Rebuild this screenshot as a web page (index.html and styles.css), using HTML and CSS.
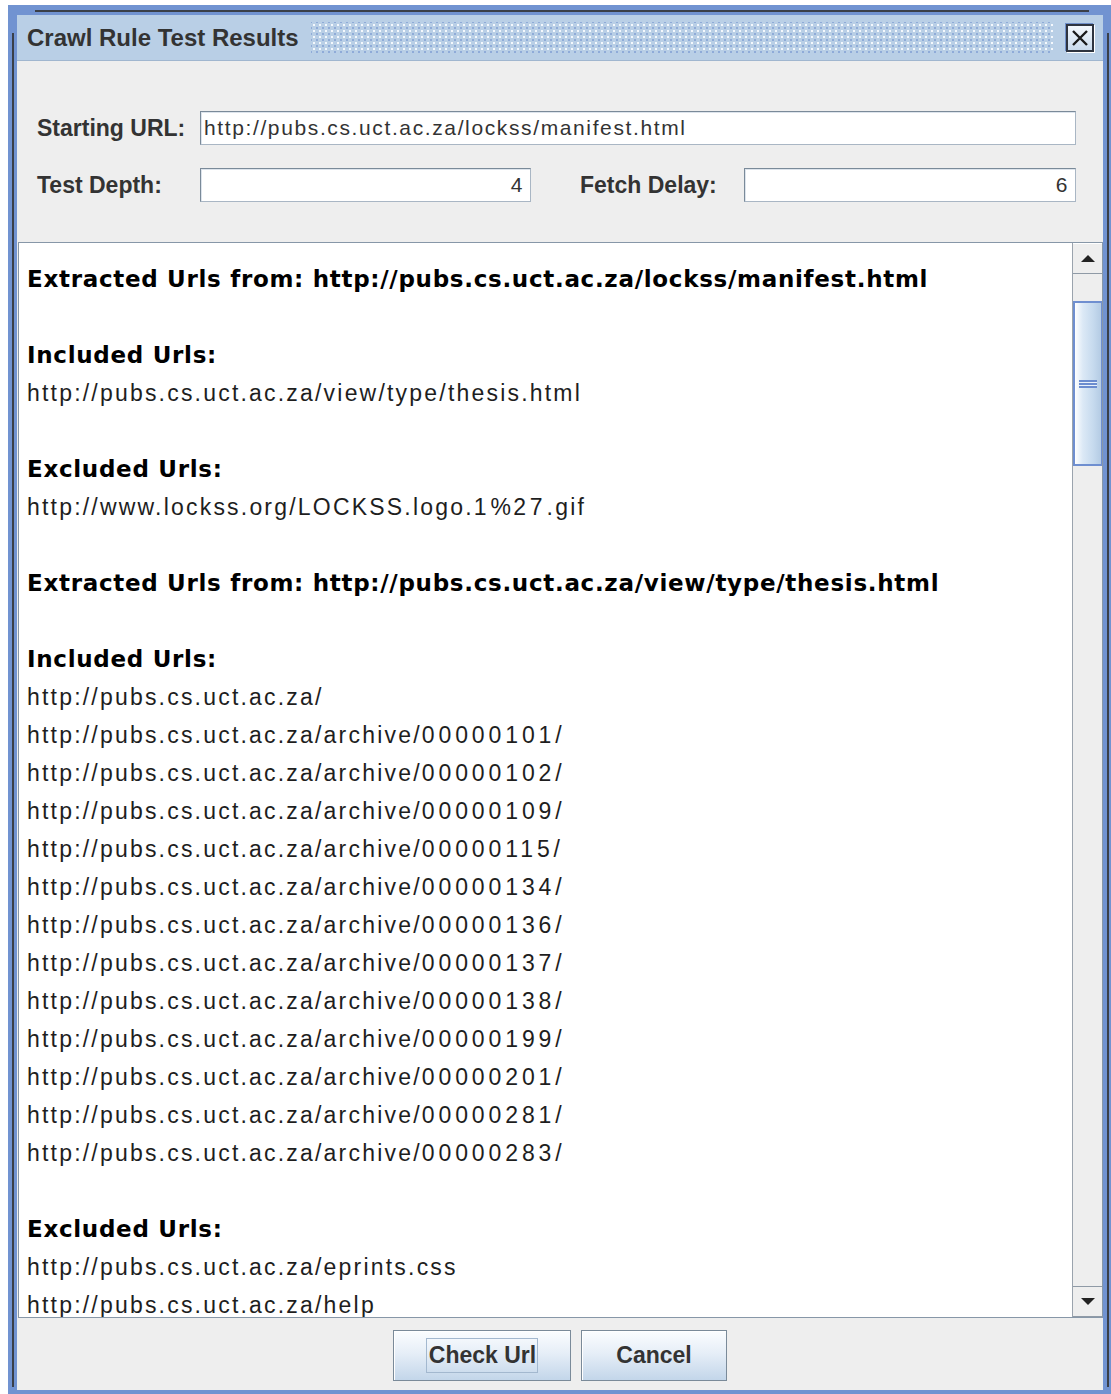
FILE: index.html
```html
<!DOCTYPE html>
<html lang="en">
<head>
<meta charset="utf-8">
<title>Crawl Rule Test Results</title>
<link rel="stylesheet" href="styles.css">
</head>
<body>
<div class="window">
  <div class="titlebar">
    <span class="title">Crawl Rule Test Results</span>
    <span class="bumps"></span>
    <span class="close" aria-label="Close">
      <svg width="24" height="24" viewBox="0 0 24 24">
        <path d="M5 5 L19 19 M19 5 L5 19" stroke="#1a1a1a" stroke-width="2.4" fill="none"/>
      </svg>
    </span>
  </div>
  <div class="content">
    <div class="form">
      <span class="lbl">Starting URL:</span>
      <div class="field wide">http://pubs.cs.uct.ac.za/lockss/manifest.html</div>
      <span class="lbl">Test Depth:</span>
      <div class="field num">4</div>
      <span class="lbl lbl-second">Fetch Delay:</span>
      <div class="field num">6</div>
    </div>
    <div class="scrollpane">
      <div class="doc">
        <div class="h">Extracted Urls from: http://pubs.cs.uct.ac.za/lockss/manifest.html</div>
        <div class="blank"></div>
        <div class="h">Included Urls:</div>
        <div>http://pubs.cs.uct.ac.za/view/type/thesis.html</div>
        <div class="blank"></div>
        <div class="h">Excluded Urls:</div>
        <div>http://www.lockss.org/LOCKSS.logo.<span class="d">1</span>%<span class="d">27</span>.gif</div>
        <div class="blank"></div>
        <div class="h">Extracted Urls from: http://pubs.cs.uct.ac.za/view/type/thesis.html</div>
        <div class="blank"></div>
        <div class="h">Included Urls:</div>
        <div>http://pubs.cs.uct.ac.za/</div>
        <div>http://pubs.cs.uct.ac.za/archive/<span class="d">00000101</span>/</div>
        <div>http://pubs.cs.uct.ac.za/archive/<span class="d">00000102</span>/</div>
        <div>http://pubs.cs.uct.ac.za/archive/<span class="d">00000109</span>/</div>
        <div>http://pubs.cs.uct.ac.za/archive/<span class="d">00000115</span>/</div>
        <div>http://pubs.cs.uct.ac.za/archive/<span class="d">00000134</span>/</div>
        <div>http://pubs.cs.uct.ac.za/archive/<span class="d">00000136</span>/</div>
        <div>http://pubs.cs.uct.ac.za/archive/<span class="d">00000137</span>/</div>
        <div>http://pubs.cs.uct.ac.za/archive/<span class="d">00000138</span>/</div>
        <div>http://pubs.cs.uct.ac.za/archive/<span class="d">00000199</span>/</div>
        <div>http://pubs.cs.uct.ac.za/archive/<span class="d">00000201</span>/</div>
        <div>http://pubs.cs.uct.ac.za/archive/<span class="d">00000281</span>/</div>
        <div>http://pubs.cs.uct.ac.za/archive/<span class="d">00000283</span>/</div>
        <div class="blank"></div>
        <div class="h">Excluded Urls:</div>
        <div>http://pubs.cs.uct.ac.za/eprints.css</div>
        <div>http://pubs.cs.uct.ac.za/help</div>
      </div>
      <div class="vscroll">
        <div class="arrow up"><span class="tri tri-up"></span></div>
        <div class="track"><div class="thumb"><span class="grip"></span></div></div>
        <div class="arrow down"><span class="tri tri-down"></span></div>
      </div>
    </div>
    <div class="buttons">
      <button class="btn btn-check"><span class="focus">Check Url</span></button>
      <button class="btn btn-cancel">Cancel</button>
    </div>
  </div>
</div>
</body>
</html>
```

FILE: styles.css
```css
html, body {
  margin: 0;
  padding: 0;
  background: #ffffff;
  overflow: hidden;
  height: 100%;
}

/* ---------- internal frame ---------- */
.window {
  position: relative;
  margin: 5px 0 0 8px;
  width: 1104px;
  box-sizing: border-box;
  padding: 10px 9px 9px 9px;
  background: #7193d1;
  font-family: "Liberation Sans", Arial, sans-serif;
}
/* dark inset lines of the frame border */
.window::before {
  content: "";
  position: absolute;
  left: 27px;
  right: 23px;
  top: 5px;
  height: 2px;
  background: #3a3f48;
}
.window::after {
  content: "";
  position: absolute;
  left: 4px;
  right: 3px;
  top: 28px;
  bottom: 12px;
  border-left: 2px solid #3a3f48;
  border-right: 2px solid #3a3f48;
}

/* ---------- title bar ---------- */
.titlebar {
  position: relative;
  z-index: 1;
  height: 45px;
  display: flex;
  align-items: center;
  background: #b9cfe6;
  border-bottom: 1px solid #a0b6cf;
  padding: 0 8px 0 10px;
}
.title {
  font-weight: bold;
  font-size: 24px;
  color: #333333;
  white-space: nowrap;
}
.bumps {
  flex: 1;
  height: 31px;
  margin: 0 12px 0 12px;
  background:
    radial-gradient(circle, #f4f8fd 0.9px, transparent 1.4px) 0 0 / 6px 6px,
    radial-gradient(circle, #8fabd8 0.9px, transparent 1.4px) 3px 3px / 6px 6px;
}
.close {
  width: 24px;
  height: 24px;
  border: 2px solid #2e3440;
  background: linear-gradient(#f4f8fc, #c9daec);
  box-shadow: 1px 1px 0 #ffffff, -1px -1px 0 #6f8fc9;
  display: flex;
  margin-right: 1px;
}

/* ---------- dialog content ---------- */
.content {
  position: relative;
  z-index: 1;
  background: #eeeeee;
  height: 1329px;
  display: flex;
  flex-direction: column;
}

.form {
  box-sizing: border-box;
  height: 181px;
  padding: 50px 27px 0 20px;
  display: grid;
  grid-template-columns: 163px 331px 1fr 332px;
  grid-template-rows: 34px 34px;
  row-gap: 23px;
  align-items: center;
}
.lbl {
  font-weight: bold;
  font-size: 23px;
  color: #333333;
  white-space: nowrap;
}
.lbl-second {
  padding-left: 49px;
}
.field {
  height: 34px;
  box-sizing: border-box;
  background: #ffffff;
  border: 1px solid #7a8a99;
  border-right-color: #a9b6c4;
  border-bottom-color: #a9b6c4;
  box-shadow: inset 1px 1px 0 #dde4ec;
  font-size: 21px;
  letter-spacing: 1.62px;
  color: #333333;
  line-height: 32px;
  padding: 0 3px;
  white-space: nowrap;
  overflow: hidden;
}
.field.wide {
  grid-column: 2 / 5;
}
.field.num {
  text-align: right;
  padding-right: 6px;
}

/* ---------- scroll pane with results ---------- */
.scrollpane {
  display: flex;
  height: 1076px;
  box-sizing: border-box;
  margin-left: 1px;
  border: 1px solid #8797a8;
}
.doc {
  flex: 1;
  background: #ffffff;
  overflow: hidden;
  padding: 17px 8px 0 8px;
  font-size: 23px;
  letter-spacing: 2.2px;
  line-height: 38px;
  color: #1e1e1e;
  white-space: nowrap;
}
/* digits are set on a wider advance */
.doc .d {
  letter-spacing: 3.9px;
}
.doc .h {
  font-family: "DejaVu Sans", Verdana, sans-serif;
  font-weight: bold;
  font-size: 23px;
  letter-spacing: 0.7px;
  color: #000000;
}
.doc .blank {
  height: 38px;
}

.vscroll {
  width: 29px;
  border-left: 1px solid #9aa3ad;
  background: #eeeeee;
  display: flex;
  flex-direction: column;
}
.arrow {
  height: 31px;
  box-sizing: border-box;
  display: flex;
  align-items: center;
  justify-content: center;
  background: #eeeeee;
}
.arrow.up {
  border-top: 1px solid #ffffff;
  border-bottom: 1px solid #8f9aa6;
}
.arrow.down {
  border-top: 1px solid #8f9aa6;
  border-bottom: 1px solid #8f9aa6;
  height: 31px;
}
.tri {
  width: 0;
  height: 0;
  border-left: 7px solid transparent;
  border-right: 7px solid transparent;
}
.tri-up {
  border-bottom: 7px solid #222222;
}
.tri-down {
  border-top: 7px solid #222222;
}
.track {
  flex: 1;
}
.thumb {
  margin-top: 27px;
  height: 165px;
  box-sizing: border-box;
  border: 2px solid #6f8fd0;
  border-right-width: 1px;
  background: linear-gradient(90deg, #ffffff 0%, #dce9f6 30%, #c6daee 70%, #b4cbe4 100%);
  display: flex;
  align-items: center;
  justify-content: center;
}
.grip {
  width: 18px;
  height: 8px;
  background: repeating-linear-gradient(#6b8ccf 0 2px, #e8f0fa 2px 3px);
}

/* ---------- button row ---------- */
.buttons {
  flex: 1;
  display: flex;
  justify-content: center;
  align-items: flex-start;
  gap: 10px;
  padding-top: 12px;
}
.btn {
  height: 51px;
  box-sizing: border-box;
  border: 1px solid #7a8a99;
  background: linear-gradient(#fbfdff 0%, #e6eef7 45%, #c3d6ea 100%);
  box-shadow: inset 1px 1px 0 #ffffff;
  font-family: "Liberation Sans", Arial, sans-serif;
  font-weight: bold;
  font-size: 23px;
  color: #333333;
  padding: 0;
  display: flex;
  align-items: center;
  justify-content: center;
}
.btn-check {
  width: 178px;
}
.btn-cancel {
  width: 146px;
}
.focus {
  border: 1px solid #a3b8cf;
  padding: 3px 1px 4px 2px;
  line-height: 26px;
}
```
